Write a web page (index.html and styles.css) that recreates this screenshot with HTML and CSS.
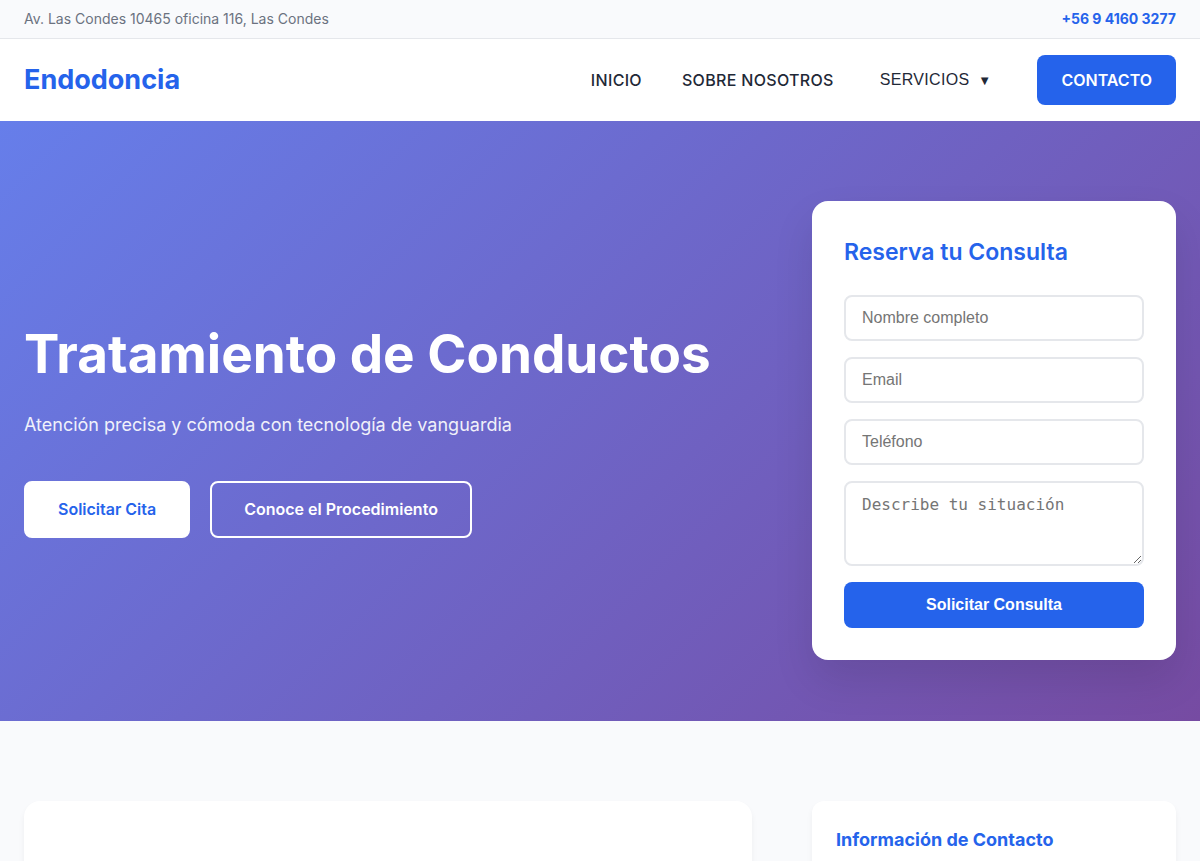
FILE: index.html
```html
<!DOCTYPE html>
<html lang="es">
<head>
<meta charset="utf-8">
<meta name="viewport" content="width=device-width, initial-scale=1">
<title>Endodoncia</title>
<link rel="stylesheet" href="styles.css">
</head>
<body>
<div class="topbar">
  <div class="container topbar-row">
    <span>Av. Las Condes 10465 oficina 116, Las Condes</span>
    <a class="phone" href="tel:+56941603277">+56 9 4160 3277</a>
  </div>
</div>
<header class="header">
  <div class="container header-row">
    <a class="logo" href="#">Endodoncia</a>
    <nav class="nav">
      <a class="nav-link" href="#">INICIO</a>
      <a class="nav-link" href="#">SOBRE NOSOTROS</a>
      <button class="nav-toggle" type="button">SERVICIOS <span class="caret">▼</span></button>
      <a class="nav-cta" href="#contacto">CONTACTO</a>
    </nav>
  </div>
</header>
<section class="hero">
  <div class="container columns hero-row">
    <div>
      <h1 class="hero-title">Tratamiento de Conductos</h1>
      <p class="hero-text">Atención precisa y cómoda con tecnología de vanguardia</p>
      <div class="hero-actions">
        <a class="btn btn-solid" href="#contacto">Solicitar Cita</a>
        <a class="btn btn-outline" href="#procedimiento">Conoce el Procedimiento</a>
      </div>
    </div>
    <form class="form-card" id="contacto">
      <h2 class="form-title">Reserva tu Consulta</h2>
      <input class="field" type="text" placeholder="Nombre completo" aria-label="Nombre completo">
      <input class="field" type="email" placeholder="Email" aria-label="Email">
      <input class="field" type="tel" placeholder="Teléfono" aria-label="Teléfono">
      <textarea class="field field-area" rows="3" placeholder="Describe tu situación" aria-label="Describe tu situación"></textarea>
      <button class="submit" type="submit">Solicitar Consulta</button>
    </form>
  </div>
</section>
<main class="main">
  <div class="container columns">
    <article class="panel panel-main" id="procedimiento"></article>
    <aside class="panel panel-side">
      <h3 class="side-title">Información de Contacto</h3>
    </aside>
  </div>
</main>
</body>
</html>
```
FILE: styles.css
```css
* { box-sizing: border-box; margin: 0; padding: 0; }
html { scrollbar-width: none; }
body {
  font-family: Inter, sans-serif;
  font-size: 16px;
  line-height: 26px;
  color: #1f2937;
  background: #f9fafc;
}
a { text-decoration: none; }
.container { max-width: 1200px; margin: 0 auto; padding: 0 24px; }
.columns { display: grid; grid-template-columns: 2fr 1fr; gap: 60px; }

.topbar {
  padding: 8px 0;
  background: #f9fafc;
  border-bottom: 1px solid #e5e7eb;
  font-size: 14px;
  line-height: 22px;
  color: #6b7280;
}
.topbar-row { display: flex; justify-content: space-between; }
.phone { color: #2563eb; font-weight: 700; }

.header { background: #fff; padding: 16px 0; }
.header-row { display: flex; justify-content: space-between; align-items: center; }
.logo { color: #2563eb; font-size: 27px; font-weight: 700; }
.nav { display: flex; align-items: center; gap: 40px; }
.nav-link { color: #1f2937; font-weight: 500; letter-spacing: 0.02em; }
.nav-toggle {
  border: 0;
  background: none;
  padding: 0 6px;
  font: 16px "Liberation Sans", sans-serif;
  letter-spacing: 0.02em;
  color: #1f2937;
}
.caret { margin-left: 4px; font-size: 13px; }
.nav-cta {
  padding: 12px 24px;
  background: #2563eb;
  color: #fff;
  border-radius: 8px;
  font-weight: 600;
}

.hero { padding: 80px 0 61px; background: linear-gradient(135deg, #667eea 0%, #764ba2 100%); }
.hero-row { align-items: center; }
.hero-title {
  color: #fff;
  font-size: 53px;
  line-height: 62px;
  font-weight: 700;
  margin-bottom: 24px;
}
.hero-text { color: #fff; opacity: 0.9; font-size: 18px; line-height: 32px; margin-bottom: 40px; }
.hero-actions { display: flex; flex-wrap: wrap; gap: 20px; }
.btn { border: 2px solid #fff; border-radius: 8px; padding: 14px 32px; line-height: 25px; font-weight: 600; }
.btn-solid { background: #fff; color: #2563eb; }
.btn-outline { color: #fff; }

.form-card {
  display: flex;
  flex-direction: column;
  gap: 16px;
  padding: 32px;
  background: #fff;
  border-radius: 16px;
  box-shadow: 0 20px 40px rgba(0, 0, 0, 0.1);
}
.form-title { color: #2563eb; font-size: 23px; line-height: 38px; font-weight: 600; margin-bottom: 8px; }
.field {
  width: 100%;
  border: 2px solid #e5e7eb;
  border-radius: 8px;
  padding: 12px 16px;
  font: 16px/18px "Liberation Sans", sans-serif;
}
.field-area { font: 16px/19px "DejaVu Sans Mono", monospace; resize: vertical; }
.submit {
  border: 0;
  border-radius: 8px;
  padding: 14px;
  background: #2563eb;
  color: #fff;
  font: bold 16px/18px "Liberation Sans", sans-serif;
}

.main { padding: 80px 0; }
.panel { background: #fff; box-shadow: 0 4px 6px rgba(0, 0, 0, 0.05); }
.panel-main { min-height: 480px; border-radius: 16px; }
.panel-side { padding: 24px; border-radius: 12px; align-self: start; min-height: 240px; }
.side-title { color: #2563eb; font-size: 18px; line-height: 29px; font-weight: 700; }
```
